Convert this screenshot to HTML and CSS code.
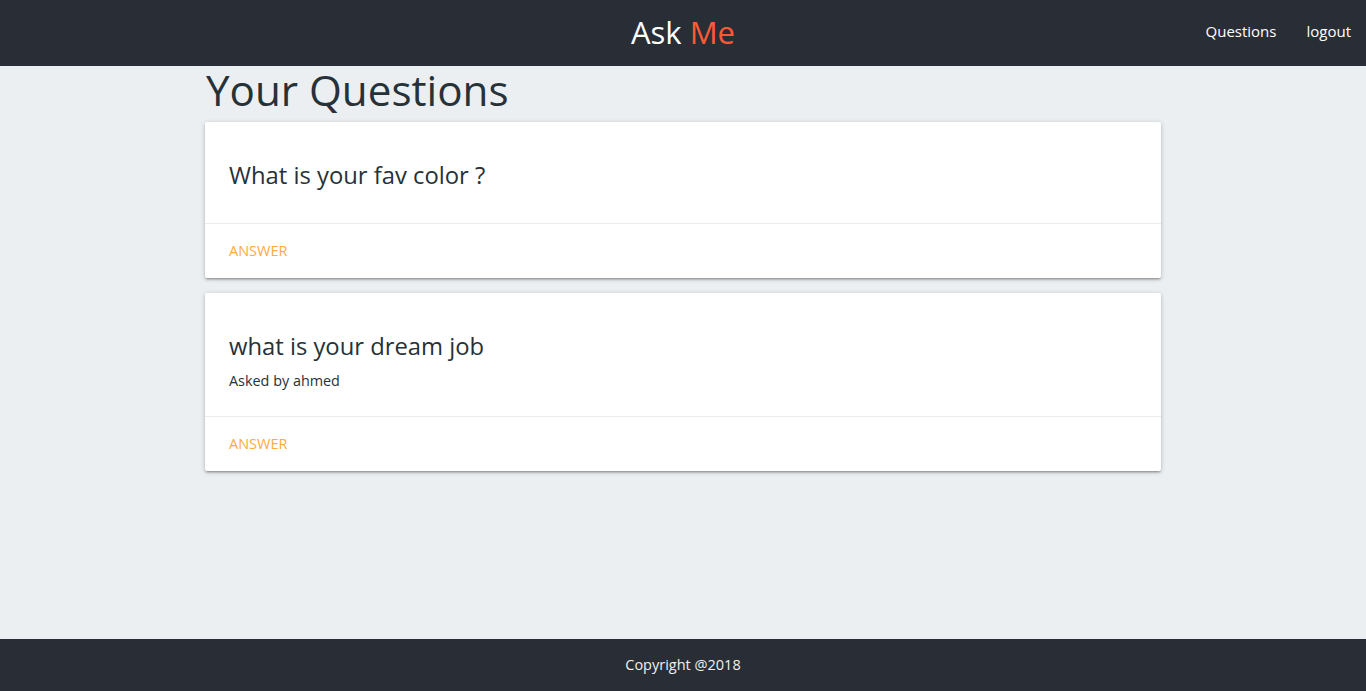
FILE: index.html
```html
<!DOCTYPE html>
<html>
<head>
<meta charset="utf-8">
<title>Ask Me</title>
<link rel="stylesheet" href="styles.css">
</head>
<body>
<header class="nav">
  <div class="brand">Ask <span class="brand-accent">Me</span></div>
  <ul class="nav-links">
    <li><a href="#">Questions</a></li>
    <li><a href="#">logout</a></li>
  </ul>
</header>
<main class="main">
  <div class="container">
    <h1 class="page-title">Your Questions</h1>
    <div class="card">
      <div class="card-content">
        <div class="card-title">What is your fav color ?</div>
      </div>
      <div class="card-action"><a href="#">ANSWER</a></div>
    </div>
    <div class="card">
      <div class="card-content">
        <div class="card-title">what is your dream job</div>
        <p class="asked">Asked by ahmed</p>
      </div>
      <div class="card-action"><a href="#">ANSWER</a></div>
    </div>
  </div>
</main>
<footer class="footer">Copyright @2018</footer>
</body>
</html>
```
FILE: styles.css
```css
* { box-sizing: border-box; }
html, body { height: 100%; }
body {
  margin: 0;
  font-family: "Open Sans", "DejaVu Sans", sans-serif;
  background: #eceff1;
  color: #263238;
  display: flex;
  flex-direction: column;
  min-height: 691px;
}
.nav {
  height: 66px;
  background: #292e36;
  display: flex;
  align-items: center;
  justify-content: center;
  position: relative;
  flex: none;
}
.brand {
  color: #ffffff;
  font-size: 31px;
  line-height: 62px;
  margin-bottom: 2px;
}
.brand-accent { color: #ff5a36; }
.nav-links {
  position: absolute;
  right: 0;
  top: 0;
  margin: 0;
  padding: 0;
  list-style: none;
  display: flex;
  height: 66px;
}
.nav-links a {
  display: block;
  padding: 0 15px;
  line-height: 62px;
  color: #ffffff;
  text-decoration: none;
  font-size: 15px;
}
.main { flex: 1; }
.container {
  width: 956px;
  margin: 0 auto;
}
.page-title {
  margin: 0;
  font-weight: 400;
  font-size: 42.2px;
  line-height: 48px;
  color: #263238;
  padding-left: 1px;
}
.card {
  background: #fff;
  margin: 8px 0 15px;
  border-radius: 2px;
  box-shadow: 0 2px 2px 0 rgba(0,0,0,0.14), 0 3px 1px -2px rgba(0,0,0,0.12), 0 1px 5px 0 rgba(0,0,0,0.2);
}
.card-content { padding: 24px; }
.card-title {
  margin: 13px 0 8px;
  font-size: 23.8px;
  line-height: 32px;
  color: #263238;
}
.asked {
  margin: 0;
  font-size: 14.4px;
  line-height: 22px;
  color: #263238;
}
.card-action {
  border-top: 1px solid rgba(160,160,160,0.2);
  padding: 16px 24px 17px;
  line-height: 20px;
}
.card-action a {
  color: #ffab40;
  text-decoration: none;
  font-size: 14.5px;
}
.footer {
  flex: none;
  height: 52px;
  background: #292e36;
  color: #f0f0f0;
  display: flex;
  align-items: center;
  justify-content: center;
  font-size: 14.5px;
  padding-bottom: 1px;
}
```
